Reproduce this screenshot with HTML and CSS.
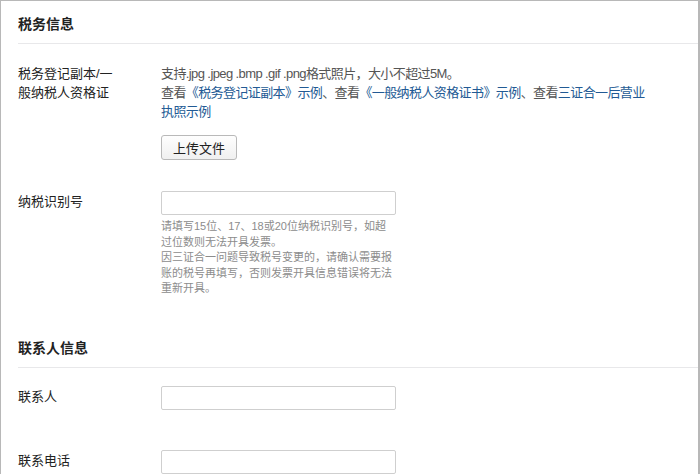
FILE: index.html
```html
<!DOCTYPE html>
<html lang="zh-CN">
<head>
	<meta charset="UTF-8">
	<title>税务信息</title>
	<link rel="stylesheet" href="styles.css">
</head>
<body>
<div class="panel">
	<h2 class="section-title">税务信息</h2>

	<div class="form-row first">
		<div class="label">税务登记副本/一般纳税人资格证</div>
		<div class="field wide">
			<p class="tip">支持.jpg .jpeg .bmp .gif .png格式照片，大小不超过5M。</p>
			<p class="links">查看<a href="#">《税务登记证副本》示例</a>、查看<a href="#">《一般纳税人资格证书》示例</a>、查看<a href="#">三证合一后营业执照示例</a></p>
			<button class="btn-upload" type="button">上传文件</button>
		</div>
	</div>

	<div class="form-row tax-no">
		<div class="label input-label">纳税识别号</div>
		<div class="field">
			<input class="text-input" type="text">
			<p class="help">请填写15位、17、18或20位纳税识别号，如超过位数则无法开具发票。<br>因三证合一问题导致税号变更的，请确认需要报账的税号再填写，否则发票开具信息错误将无法重新开具。</p>
		</div>
	</div>

	<h2 class="section-title contact">联系人信息</h2>

	<div class="form-row person">
		<div class="label input-label">联系人</div>
		<div class="field">
			<input class="text-input" type="text">
		</div>
	</div>

	<div class="form-row phone">
		<div class="label input-label">联系电话</div>
		<div class="field">
			<input class="text-input" type="text">
		</div>
	</div>
</div>
</body>
</html>
```

FILE: styles.css
```css
html, body{
	margin: 0;
	height: 100%;
	overflow: hidden;
	background: #fff;
}
body{
	font-family: "Liberation Sans", "Noto Sans CJK SC", sans-serif;
	font-size: 13px;
	color: #333;
}
.panel{
	height: 100%;
	box-sizing: border-box;
	border-top: 1px solid #b8b8b8;
	border-left: 1px solid #b8b8b8;
	border-right: 2px solid #b8b8b8;
	padding-left: 17px;
}

/* 섹션 제목 */
.section-title{
	margin: 13px 0 0;
	padding-bottom: 9px;
	font-size: 14px;
	line-height: 20px;
	font-weight: bold;
	color: #222;
	border-bottom: 1px solid #e8e8ea;
}
.section-title.contact{
	margin-top: 41px;
}

/* 폼 한 줄 */
.form-row{
	display: flex;
	align-items: flex-start;
}
.form-row.first{ margin-top: 20px; }
.form-row.tax-no{ margin-top: 31px; }
.form-row.person{ margin-top: 18px; }
.form-row.phone{ margin-top: 40px; }

.label{
	flex: none;
	width: 100px;
	margin-right: 43px;
	line-height: 19px;
	color: #222;
}
.input-label{
	padding-top: 1px;
}

.field.wide{
	width: 490px;
}
.field p{
	margin: 0;
}
.tip, .links{
	line-height: 19px;
	color: #555;
	letter-spacing: -0.6px;
}
.links a{
	color: #225a94;
	text-decoration: none;
}

.btn-upload{
	display: block;
	margin-top: 14px;
	width: 76px;
	height: 25px;
	padding: 0;
	font-family: inherit;
	font-size: 13px;
	color: #222;
	background: linear-gradient(#fefefe, #f0f0f0);
	border: 1px solid #b9b9b9;
	border-radius: 3px;
}

.text-input{
	display: block;
	box-sizing: border-box;
	width: 235px;
	height: 24px;
	margin: 0;
	border: 1px solid #cfcfcf;
	border-radius: 2px;
	background: #fff;
}

.help{
	width: 233px;
	margin-top: 4px !important;
	font-size: 11px;
	line-height: 15.5px;
	color: #8c8c8c;
}
```
